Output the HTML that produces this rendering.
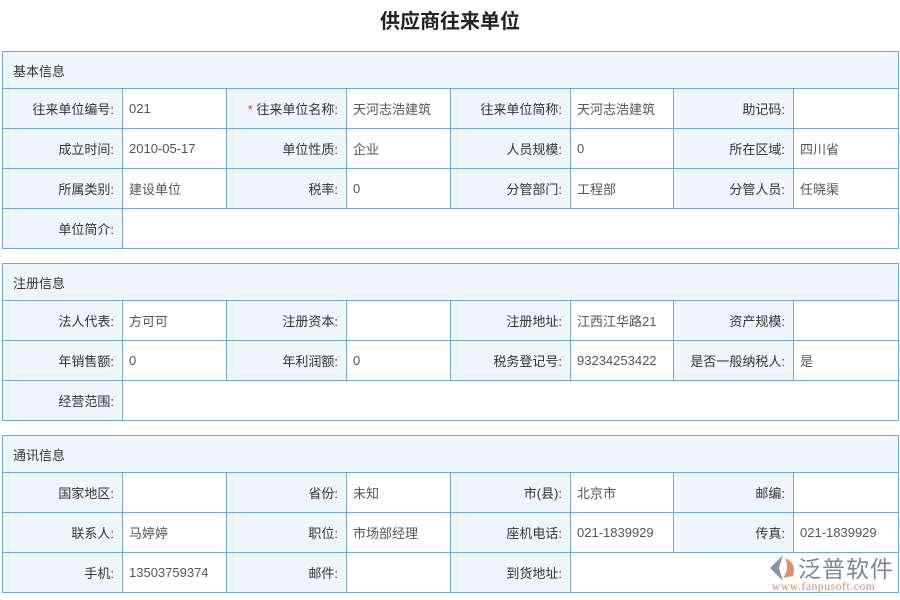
<!DOCTYPE html>
<html><head><meta charset="utf-8"><style>
body{margin:0;width:900px;height:600px;background:#fff;font-family:"Liberation Sans","Noto Sans CJK SC",sans-serif;font-size:13px;color:#333;position:relative;overflow:hidden}
h1{position:absolute;top:5px;left:0;width:900px;text-align:center;margin:0;font-size:20px;font-weight:bold;color:#222;font-family:"Noto Sans CJK SC",sans-serif}
table{position:absolute;left:2px;width:896px;border-collapse:collapse;table-layout:fixed}
td{border:1px solid #6fa8dc;height:39px;padding:0 6px;white-space:nowrap;overflow:hidden}
td.h{background:#eef5fd;height:36px;padding-left:10px;color:#333}
td.l{background:#eef5fd;text-align:right;padding-right:8px}
td.v{color:#555}
.s{color:#e33}
</style></head><body>
<h1>供应商往来单位</h1>
<table style="top:51px">
<colgroup><col style="width:120px"><col style="width:104px"><col style="width:120px"><col style="width:104px"><col style="width:120px"><col style="width:103px"><col style="width:120px"><col style="width:105px"></colgroup>
<tr><td class="h" colspan="8">基本信息</td></tr>
<tr><td class="l">往来单位编号:</td><td class="v">021</td><td class="l"><span class="s">*</span> 往来单位名称:</td><td class="v">天河志浩建筑</td><td class="l">往来单位简称:</td><td class="v">天河志浩建筑</td><td class="l">助记码:</td><td class="v"></td></tr>
<tr><td class="l">成立时间:</td><td class="v">2010-05-17</td><td class="l">单位性质:</td><td class="v">企业</td><td class="l">人员规模:</td><td class="v">0</td><td class="l">所在区域:</td><td class="v">四川省</td></tr>
<tr><td class="l">所属类别:</td><td class="v">建设单位</td><td class="l">税率:</td><td class="v">0</td><td class="l">分管部门:</td><td class="v">工程部</td><td class="l">分管人员:</td><td class="v">任晓渠</td></tr>
<tr><td class="l">单位简介:</td><td class="v" colspan="7"></td></tr>
</table>
<table style="top:263px">
<colgroup><col style="width:120px"><col style="width:104px"><col style="width:120px"><col style="width:104px"><col style="width:120px"><col style="width:103px"><col style="width:120px"><col style="width:105px"></colgroup>
<tr><td class="h" colspan="8">注册信息</td></tr>
<tr><td class="l">法人代表:</td><td class="v">方可可</td><td class="l">注册资本:</td><td class="v"></td><td class="l">注册地址:</td><td class="v">江西江华路21</td><td class="l">资产规模:</td><td class="v"></td></tr>
<tr><td class="l">年销售额:</td><td class="v">0</td><td class="l">年利润额:</td><td class="v">0</td><td class="l">税务登记号:</td><td class="v">93234253422</td><td class="l">是否一般纳税人:</td><td class="v">是</td></tr>
<tr><td class="l">经营范围:</td><td class="v" colspan="7"></td></tr>
</table>
<table style="top:435px">
<colgroup><col style="width:120px"><col style="width:104px"><col style="width:120px"><col style="width:104px"><col style="width:120px"><col style="width:103px"><col style="width:120px"><col style="width:105px"></colgroup>
<tr><td class="h" colspan="8">通讯信息</td></tr>
<tr><td class="l">国家地区:</td><td class="v"></td><td class="l">省份:</td><td class="v">未知</td><td class="l">市(县):</td><td class="v">北京市</td><td class="l">邮编:</td><td class="v"></td></tr>
<tr><td class="l">联系人:</td><td class="v">马婷婷</td><td class="l">职位:</td><td class="v">市场部经理</td><td class="l">座机电话:</td><td class="v">021-1839929</td><td class="l">传真:</td><td class="v">021-1839929</td></tr>
<tr><td class="l">手机:</td><td class="v">13503759374</td><td class="l">邮件:</td><td class="v"></td><td class="l">到货地址:</td><td class="v" colspan="3"></td></tr>
</table>
<div style="position:absolute;left:768px;top:554px;width:128px;height:42px">
<svg width="30" height="28" viewBox="0 0 30 28" style="position:absolute;left:0;top:0"><path d="M15 1 L2 14 L15 27 L11 14 Z" fill="#8a94a8"/><path d="M17 4 Q29 9 25 22 L15 24 Q22 15 17 4Z" fill="#e0906e"/></svg>
<div style="position:absolute;left:30px;top:-4px;font-size:23px;color:#7d8696;letter-spacing:1px;font-family:'Noto Sans CJK SC',sans-serif">泛普软件</div>
<div style="position:absolute;left:4px;top:27px;font-size:11.5px;color:#d88a6a;font-family:'Liberation Serif',serif;letter-spacing:0.6px">www.fanpusoft.com</div>
</div>
</body></html>
